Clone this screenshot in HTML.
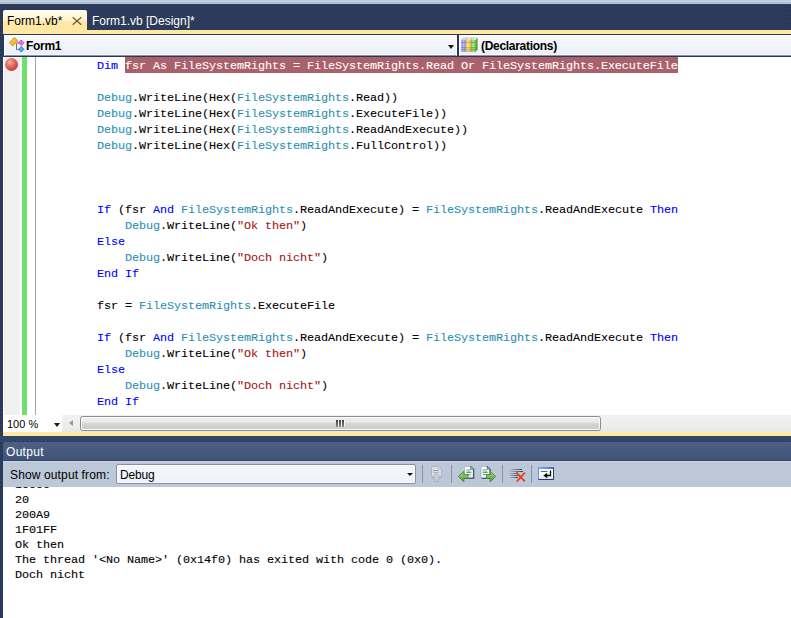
<!DOCTYPE html>
<html>
<head>
<meta charset="utf-8">
<title>Form1.vb</title>
<style>
*{margin:0;padding:0;box-sizing:border-box;}
html,body{width:791px;height:618px;overflow:hidden;background:#293955;}
body{position:relative;font-family:"Liberation Sans",sans-serif;font-size:12px;color:#000;}
.abs{position:absolute;}
#dots{left:0;top:0;width:791px;height:618px;}
#topstrip{left:0;top:0;width:791px;height:4px;background:linear-gradient(#bcc8db 0,#bcc8db 1px,#cdd6e6 1px,#cdd6e6 2px,#acb8d0 2px,#acb8d0 3px,#b8c4d9 3px,#b8c4d9 4px);}
#tab1{left:3px;top:10px;width:84px;height:20px;border-radius:2px 2px 0 0;background:linear-gradient(#fffcf4 0,#fff3cd 11px,#ffe8a6 11px,#ffe8a6 20px);}
.tabtxt{top:14px;height:15px;line-height:15px;white-space:nowrap;font-size:12px;}
#ystrip1{left:3px;top:30px;width:788px;height:4px;background:#ffe8a6;}
#navbar{left:3px;top:34px;width:788px;height:23px;background:#293955;}
.navbox{top:35px;height:21px;background:linear-gradient(#f8f9fc,#ebeef6);border:1px solid #fff;border-bottom-color:#8a94ab;box-shadow:inset 0 -1px 0 #f7f8fb;}
.navtxt{top:39px;height:15px;line-height:15px;font-weight:bold;font-size:12px;letter-spacing:-0.3px;white-space:nowrap;}
#code{left:3px;top:57px;width:788px;height:358px;background:#fff;overflow:hidden;}
#imargin{left:1px;top:0;width:16px;height:358px;background:#f0f0f0;}
#green{left:19.3px;top:0;width:5.2px;height:358px;background:#6ce26c;}
#oline{left:32px;top:0;width:1px;height:358px;background:#a5a5a5;}
pre{font-family:"Liberation Mono",monospace;-webkit-text-stroke:0.1px;font-size:11.8px;letter-spacing:-0.0811px;line-height:16px;white-space:pre;}
#src{left:94px;top:1px;}
#hlbar{left:122px;top:0;width:553px;height:16px;background:#ab616b;}
.k{color:#0000ff}.t{color:#2b91af}.s{color:#a31515}
.hl{color:#fff;}
#bp{left:2px;top:1px;width:13px;height:13px;border-radius:50%;background:radial-gradient(circle at 38% 32%,#f4b2aa 0,#e67a72 28%,#d4504c 58%,#b93232 84%,#8e1c1c 100%);}
#hrow{left:4px;top:415px;width:787px;height:17px;background:linear-gradient(#f1f1f1,#ededed 70%,#e6e6e6);}
#zoombox{left:-1px;top:0;width:59px;height:17px;background:#fff;}
#thumb{left:76px;top:1px;width:521px;height:15px;border:1px solid #8c8c8c;border-radius:2.5px;box-shadow:inset 0 0 0 1px #fbfbfb;background:linear-gradient(#f0f0f0 0,#e6e6e6 45%,#d6d6d6 50%,#c9c9cc 100%);}
#ystrip2{left:3px;top:432px;width:788px;height:4px;background:#ffe8a6;}
#otitle{left:3px;top:442px;width:788px;height:19px;border-radius:2px 0 0 0;background:linear-gradient(#4e6184,#40537a);border-bottom:1px solid #374a70;color:#fff;}
#otool{left:3px;top:461px;width:788px;height:26px;background:#bcc7d8;box-shadow:inset 0 1px 0 #c8d1e0;}
#obody{left:3px;top:487px;width:788px;height:131px;background:#fff;overflow:hidden;}
#otext{left:12px;top:-9px;line-height:15px;}
#combo{left:113px;top:3px;width:300px;height:20px;border:1px solid #8591a8;border-radius:2px;box-shadow:inset 0 0 0 1px #fafbfd;background:linear-gradient(#f6f7fb,#eff1f7);}
.sep{top:4px;width:1px;height:18px;background:#8a98b2;}
</style>
</head>
<body>
<svg id="dots" class="abs" width="791" height="618">
<defs><pattern id="p" x="0" y="0" width="4" height="4" patternUnits="userSpaceOnUse">
<rect width="4" height="4" fill="#2a3a58"/>
<rect x="1" y="0" width="1" height="1" fill="#35476a"/>
<rect x="3" y="2" width="1" height="1" fill="#35476a"/>
<rect x="1" y="3" width="1" height="1" fill="#243350"/>
<rect x="3" y="1" width="1" height="1" fill="#243350"/>
</pattern>
<pattern id="p2" x="0" y="0" width="4" height="4" patternUnits="userSpaceOnUse">
<rect width="4" height="4" fill="#33466a"/>
<rect x="3" y="1" width="1" height="1" fill="#293a5e"/>
<rect x="1" y="3" width="1" height="1" fill="#293a5e"/>
<rect x="1" y="0" width="1" height="1" fill="#36496e"/>
<rect x="3" y="2" width="1" height="1" fill="#36496e"/>
</pattern></defs>
<rect width="791" height="618" fill="url(#p)"/>
<rect x="0" y="436" width="791" height="6" fill="url(#p2)"/>
</svg>
<div id="topstrip" class="abs"></div>
<div id="tab1" class="abs"></div>
<div class="abs tabtxt" style="left:7px;color:#000;">Form1.vb*</div>
<svg class="abs" style="left:71px;top:16px" width="12" height="10"><path d="M1.7 1.3L10.3 8.7M10.3 1.3L1.7 8.7" stroke="#6a5c3a" stroke-width="1.3" fill="none"/></svg>
<div class="abs tabtxt" style="left:92px;color:#fff;">Form1.vb [Design]*</div>
<div id="ystrip1" class="abs"></div>
<div id="navbar" class="abs"></div>
<div class="abs navbox" style="left:4px;width:453px;"></div>
<div class="abs navbox" style="left:458.6px;width:333px;border-right:0;"></div>
<svg class="abs" style="left:7px;top:35px" width="20" height="20" viewBox="7 35 20 20">
<defs><linearGradient id="gy" x1="0" y1="0" x2="1" y2="1"><stop offset="0" stop-color="#f9dc60"/><stop offset="1" stop-color="#e0a410"/></linearGradient></defs>
<path d="M16.5 43.5V49.5H19M16.5 43H19" stroke="#5f6f8c" stroke-width="1" fill="none"/>
<path d="M9.3 42.6L14.4 37.5L17.8 40.8L12.7 45.9Z" fill="url(#gy)" stroke="#c08e12" stroke-width="0.9"/>
<path d="M21.3 40L24.1 42.8L21.3 45.6L18.5 42.8Z" fill="#e66cea" stroke="#b840c4" stroke-width="0.8"/>
<path d="M21.3 46.5L24.1 49.3L21.3 52.1L18.5 49.3Z" fill="#5aa2f2" stroke="#2f70cc" stroke-width="0.8"/>
</svg>
<svg class="abs" style="left:461px;top:37px" width="18" height="16" viewBox="461 37 18 16">
<defs>
<linearGradient id="bp1" x1="0" y1="0" x2="1" y2="0"><stop offset="0" stop-color="#8a86e0"/><stop offset="0.45" stop-color="#bab6fc"/><stop offset="1" stop-color="#8480d8"/></linearGradient>
<linearGradient id="by1" x1="0" y1="0" x2="1" y2="0"><stop offset="0" stop-color="#e6b840"/><stop offset="0.45" stop-color="#fce994"/><stop offset="1" stop-color="#dfae38"/></linearGradient>
<linearGradient id="bg1" x1="0" y1="0" x2="1" y2="0"><stop offset="0" stop-color="#74bc4e"/><stop offset="0.45" stop-color="#b2ea92"/><stop offset="1" stop-color="#6cb446"/></linearGradient>
</defs>
<path d="M461.6 40L463.6 38H467.4L465.8 40Z" fill="#eef0fa" stroke="#8a88c8" stroke-width="0.5"/>
<path d="M465.9 40L467.8 38H472.3L470.9 40Z" fill="#f8f4e6" stroke="#b9a670" stroke-width="0.5"/>
<path d="M471 40L472.9 38H477.6L476 40Z" fill="#eef6ea" stroke="#86aa78" stroke-width="0.5"/>
<rect x="461.4" y="40" width="4.4" height="11.6" fill="url(#bp1)"/>
<rect x="465.8" y="40" width="5.1" height="11.6" fill="url(#by1)"/>
<rect x="470.9" y="40" width="5.1" height="11.6" fill="url(#bg1)"/>
<path d="M476 40L477.6 38V49.8L476 51.6Z" fill="#5a9a3c"/>
<path d="M461.4 42.4H465.8M461.4 47.7H465.8M461.4 49.7H465.8" stroke="#7470cc" stroke-width="0.8"/>
<path d="M465.8 42.4H470.9M465.8 47.7H470.9M465.8 49.7H470.9" stroke="#cf9e2e" stroke-width="0.8"/>
<path d="M470.9 42.4H476M470.9 47.7H476M470.9 49.7H476" stroke="#5c9e38" stroke-width="0.8"/>
<path d="M461.4 51.3H476" stroke="#5a5a70" stroke-width="0.6" opacity="0.6"/>
</svg>
<div class="abs navtxt" style="left:26px;">Form1</div>
<div class="abs navtxt" style="left:481px;">(Declarations)</div>
<div class="abs" style="left:447.5px;top:45px;width:0;height:0;border-left:3.5px solid transparent;border-right:3.5px solid transparent;border-top:4px solid #1b1b1b;"></div>

<div id="code" class="abs">
<div id="imargin" class="abs"></div>
<div id="green" class="abs"></div>
<div id="oline" class="abs"></div>
<div id="bp" class="abs"></div>
<div id="hlbar" class="abs"></div>
<pre id="src" class="abs"><span class="k">Dim</span> <span class="hl">fsr As FileSystemRights = FileSystemRights.Read Or FileSystemRights.ExecuteFile</span>

<span class="t">Debug</span>.WriteLine(Hex(<span class="t">FileSystemRights</span>.Read))
<span class="t">Debug</span>.WriteLine(Hex(<span class="t">FileSystemRights</span>.ExecuteFile))
<span class="t">Debug</span>.WriteLine(Hex(<span class="t">FileSystemRights</span>.ReadAndExecute))
<span class="t">Debug</span>.WriteLine(Hex(<span class="t">FileSystemRights</span>.FullControl))



<span class="k">If</span> (fsr <span class="k">And</span> <span class="t">FileSystemRights</span>.ReadAndExecute) = <span class="t">FileSystemRights</span>.ReadAndExecute <span class="k">Then</span>
    <span class="t">Debug</span>.WriteLine(<span class="s">"Ok then"</span>)
<span class="k">Else</span>
    <span class="t">Debug</span>.WriteLine(<span class="s">"Doch nicht"</span>)
<span class="k">End If</span>

fsr = <span class="t">FileSystemRights</span>.ExecuteFile

<span class="k">If</span> (fsr <span class="k">And</span> <span class="t">FileSystemRights</span>.ReadAndExecute) = <span class="t">FileSystemRights</span>.ReadAndExecute <span class="k">Then</span>
    <span class="t">Debug</span>.WriteLine(<span class="s">"Ok then"</span>)
<span class="k">Else</span>
    <span class="t">Debug</span>.WriteLine(<span class="s">"Doch nicht"</span>)
<span class="k">End If</span></pre>
</div>

<div id="hrow" class="abs">
<div id="zoombox" class="abs"></div>
<div class="abs" style="left:3px;top:2px;line-height:15px;font-size:11px;letter-spacing:0;">100 %</div>
<div class="abs" style="left:49.5px;top:8px;width:0;height:0;border-left:3.5px solid transparent;border-right:3.5px solid transparent;border-top:4px solid #1b1b1b;"></div>
<div class="abs" style="left:65px;top:5px;width:0;height:0;border-top:3.5px solid transparent;border-bottom:3.5px solid transparent;border-right:4.5px solid #9a9a9a;"></div>
<div id="thumb" class="abs"></div>
<svg class="abs" style="left:331px;top:5px" width="10" height="8"><defs><linearGradient id="gg" x1="0" y1="0" x2="0" y2="1"><stop offset="0" stop-color="#3c3c3c"/><stop offset="1" stop-color="#8a8a8a"/></linearGradient></defs><rect x="1" y="0" width="2" height="7" fill="url(#gg)"/><rect x="4" y="0" width="2" height="7" fill="url(#gg)"/><rect x="7" y="0" width="2" height="7" fill="url(#gg)"/><rect x="3" y="0" width="1" height="7" fill="#fff" opacity="0.8"/><rect x="6" y="0" width="1" height="7" fill="#fff" opacity="0.8"/><rect x="9" y="0" width="1" height="7" fill="#fff" opacity="0.8"/></svg>
</div>
<div id="ystrip2" class="abs"></div>
<div id="otitle" class="abs"><div class="abs" style="left:3px;top:3px;line-height:15px;font-size:12px;letter-spacing:0.3px;">Output</div></div>
<div id="otool" class="abs">
<div class="abs" style="left:7px;top:7px;line-height:15px;font-size:12px;letter-spacing:0.13px;white-space:nowrap;">Show output from:</div>
<div id="combo" class="abs"><div class="abs" style="left:3px;top:3px;line-height:15px;font-size:12px;letter-spacing:-0.2px;">Debug</div>
<div class="abs" style="left:290px;top:8px;width:0;height:0;border-left:3px solid transparent;border-right:3px solid transparent;border-top:3px solid #111;"></div></div>
<svg class="abs" style="left:413px;top:0" width="150" height="26" viewBox="416 461 150 26">
<defs>
<linearGradient id="ga" x1="0" y1="0" x2="0" y2="1"><stop offset="0" stop-color="#a5dc84"/><stop offset="1" stop-color="#4f9e34"/></linearGradient>
<linearGradient id="gl" x1="0" y1="0" x2="1" y2="0"><stop offset="0" stop-color="#b4bfd2"/><stop offset="1" stop-color="#33436a"/></linearGradient>
<linearGradient id="gw" x1="0" y1="0" x2="0" y2="1"><stop offset="0" stop-color="#ffffff"/><stop offset="0.6" stop-color="#ffffff"/><stop offset="1" stop-color="#d4deee"/></linearGradient>
<linearGradient id="gt" x1="0" y1="0" x2="1" y2="0"><stop offset="0" stop-color="#86aef0"/><stop offset="1" stop-color="#3f6fce"/></linearGradient>
<linearGradient id="gp" x1="0" y1="0" x2="1" y2="1"><stop offset="0" stop-color="#ffffff"/><stop offset="0.6" stop-color="#fafbfe"/><stop offset="1" stop-color="#cdd6e8"/></linearGradient>
</defs>
<g fill="#8492ac"><rect x="422" y="465" width="1" height="18"/><rect x="451" y="465" width="1" height="18"/><rect x="502" y="465" width="1" height="18"/><rect x="531" y="465" width="1" height="18"/></g>
<!-- disabled go-to icon -->
<path d="M431.5 466.5H438.5L441.5 469.5V477.5H431.5Z" fill="#dadde4" stroke="#b3b7c1" stroke-width="1"/>
<path d="M438.5 466.5V469.5H441.5Z" fill="#f0f1f5" stroke="#b3b7c1" stroke-width="0.8"/>
<path d="M433 470.5H438.5" stroke="#9a9eaa" stroke-width="1"/>
<path d="M433 472.5H438.5" stroke="#b4b7c1" stroke-width="1"/>
<path d="M436.5 473L441 477.4H438.7V481.5H434.3V477.4H432Z" fill="#c9ccd3" stroke="#a3a6b0" stroke-width="0.8"/>
<!-- prev message -->
<path d="M464.5 466.5H471L473.5 469V478H464.5Z" fill="url(#gp)" stroke="#8f9db8" stroke-width="0.6"/>
<path d="M473.7 469.2V478.3H465" fill="none" stroke="#34446a" stroke-width="1.1"/>
<path d="M470.8 466.3V469.2H473.7Z" fill="#e9edf5" stroke="#34446a" stroke-width="0.8"/>
<path d="M466.3 470H470.5M466.3 474.6H470.5" stroke="#7c8496" stroke-width="1"/>
<path d="M466.3 472.3H471.3" stroke="#27d11f" stroke-width="1.5"/>
<path d="M458.2 476.5L463.8 471.4V474.6H468V478.5H463.8V481.8Z" fill="url(#ga)" stroke="#3c7e26" stroke-width="0.8"/>
<!-- next message -->
<path d="M481 466.5H487.5L490 469V478H481Z" fill="url(#gp)" stroke="#8f9db8" stroke-width="0.6"/>
<path d="M490.2 469.2V478.3H481.5" fill="none" stroke="#34446a" stroke-width="1.1"/>
<path d="M487.3 466.3V469.2H490.2Z" fill="#e9edf5" stroke="#34446a" stroke-width="0.8"/>
<path d="M482.6 470H487M482.6 474.6H487" stroke="#7c8496" stroke-width="1"/>
<path d="M482.6 472.3H487.6" stroke="#27d11f" stroke-width="1.5"/>
<path d="M495.7 476.5L490.2 471.4V474.6H486.5V478.5H490.2V481.8Z" fill="url(#ga)" stroke="#3c7e26" stroke-width="0.8"/>
<!-- clear all -->
<rect x="509" y="469" width="13" height="1" fill="url(#gl)"/>
<rect x="509" y="471" width="14" height="1" fill="url(#gl)"/>
<rect x="509" y="473" width="9" height="1" fill="url(#gl)"/>
<rect x="509" y="475" width="9" height="1" fill="url(#gl)"/>
<rect x="509" y="477" width="9" height="1" fill="url(#gl)"/>
<path d="M516.8 472.8L524.3 480.8M524.5 473.2L517.2 481" stroke="#ee3a1c" stroke-width="1.8" stroke-linecap="round" fill="none"/>
<!-- word wrap -->
<rect x="538.5" y="467.5" width="15" height="12" fill="url(#gw)" stroke="#6f92d6" stroke-width="1"/>
<path d="M553.5 467.5V479.5H538.5" fill="none" stroke="#2a3a62" stroke-width="1"/>
<rect x="539" y="467" width="14.5" height="2" fill="url(#gt)"/>
<path d="M541 471.5H547.5" stroke="#3a62c8" stroke-width="1"/>
<path d="M550.5 470.6V475.5H546.5" fill="none" stroke="#000" stroke-width="1.3"/>
<path d="M543.3 475.5L547.2 472.8V478.2Z" fill="#000"/>
</svg>
</div>
<div id="obody" class="abs">
<pre id="otext" class="abs">10000
20
200A9
1F01FF
Ok then
The thread '&lt;No Name&gt;' (0x14f0) has exited with code 0 (0x0).
Doch nicht</pre>
</div>
</body>
</html>
